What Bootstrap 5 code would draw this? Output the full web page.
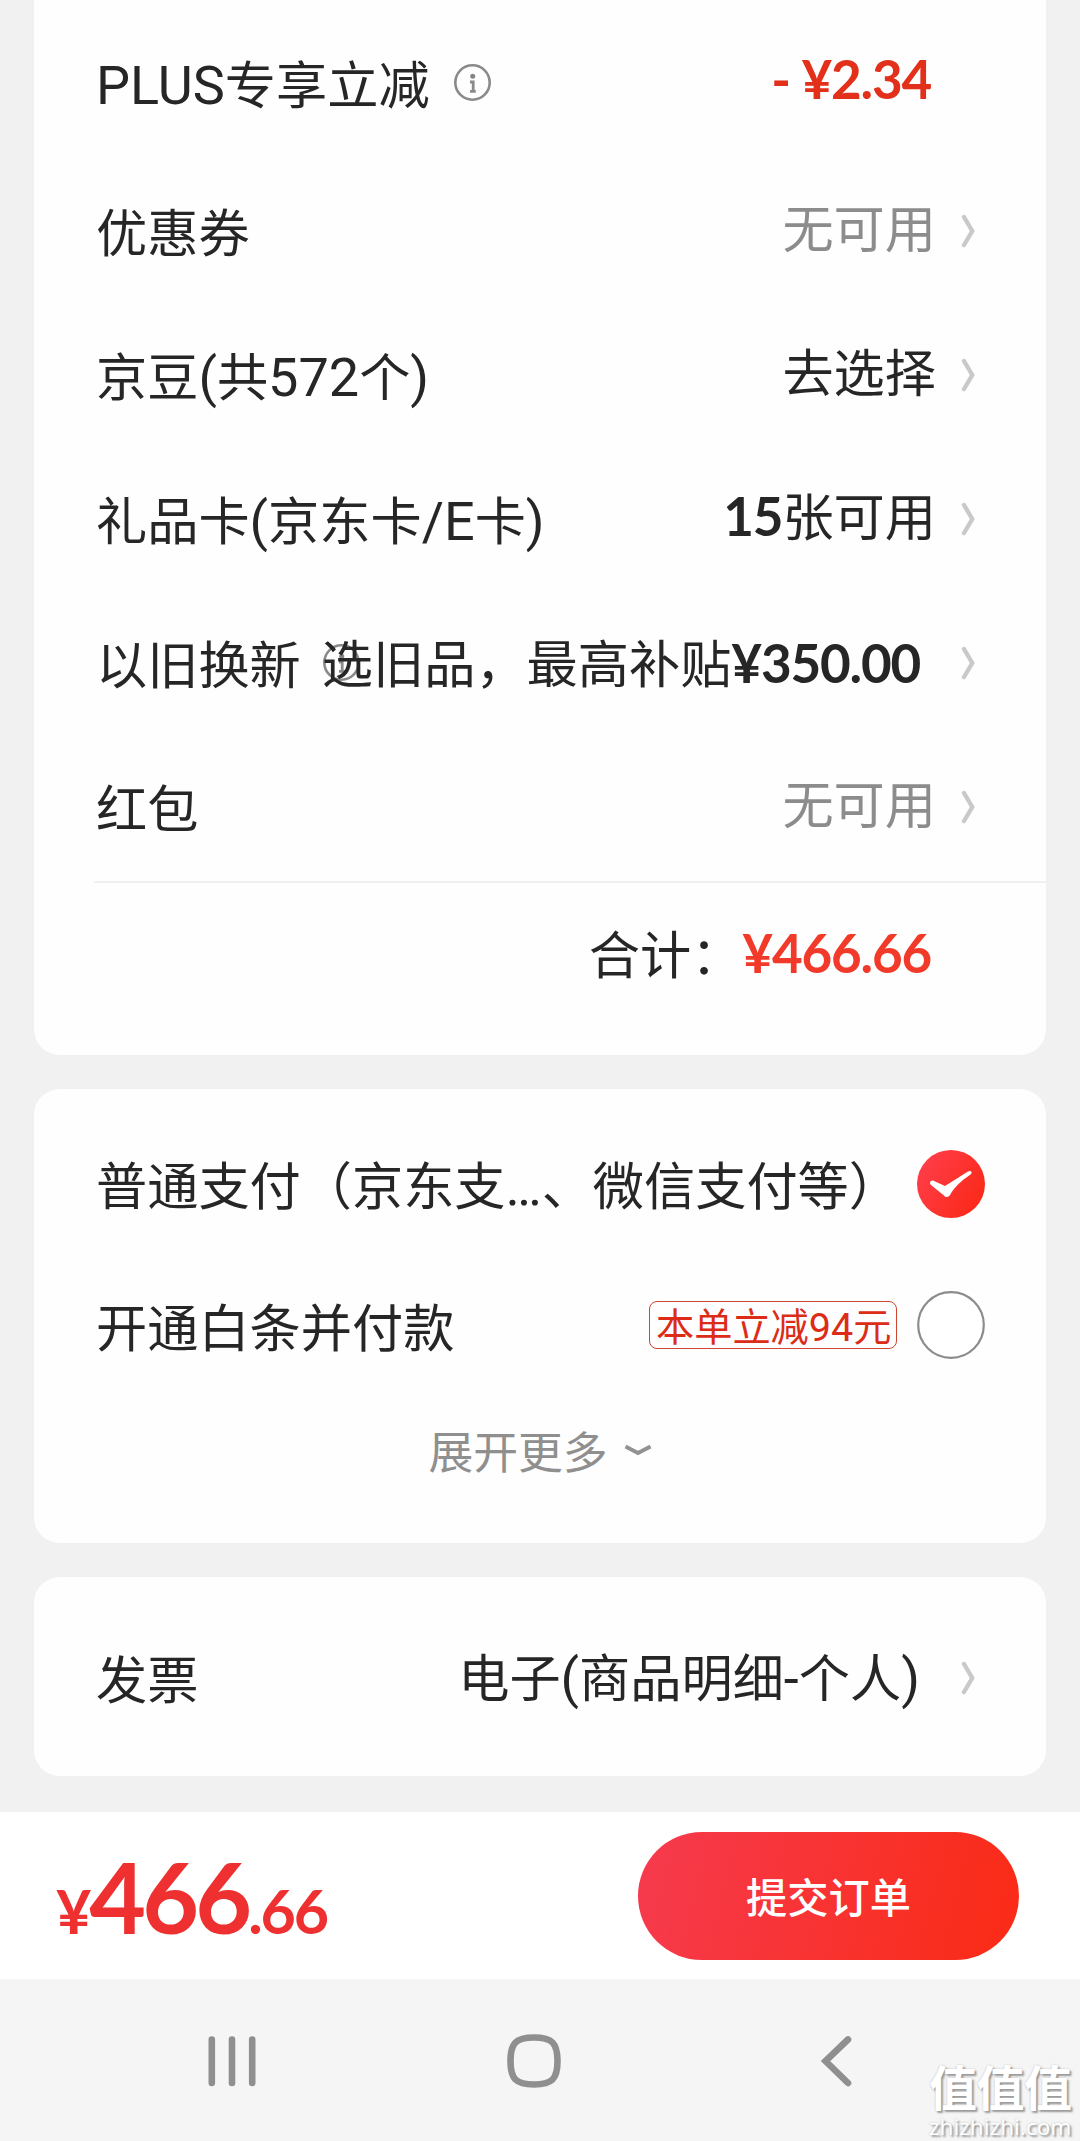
<!DOCTYPE html>
<html lang="zh-CN">
<head>
<meta charset="utf-8">
<meta name="viewport" content="width=device-width, initial-scale=1">
<title>填写订单</title>
<link href="https://cdn.jsdelivr.net/npm/bootstrap@5.3.0/dist/css/bootstrap.min.css" rel="stylesheet">
<style>
  body { background: #f1f1f1; color: #262626; font: 400 51.2px/60px "Noto Sans CJK SC", sans-serif; width: 1080px; height: 2141px; overflow: hidden; }
  .latin { font-family: Roboto, sans-serif; font-size: 54px; line-height: 1; }
  .digits { font-family: Lato, sans-serif; font-weight: 700; font-size: 53px; line-height: 1; letter-spacing: -1.2px; }
  .panel { margin: 0 34px 34px; border: 0; border-radius: 26px; background: #fefefe; }
  .panel-top { height: 1055px; border-radius: 0 0 26px 26px; }
  .line-item { height: 144px; padding: 0 71px 0 62px; white-space: nowrap; }
  .line-first { height: 158px; padding-top: 7px; padding-right: 115px; }
  .value { margin-left: auto; margin-right: 25px; padding-bottom: 9px; }
  .value-level { padding-bottom: 2px; margin-right: 41px; }
  .muted { color: #8c8c8c; }
  .price { color: #e2301a; }
  .price-total { color: #f23a2a; }
  .chev { width: 14px; height: 34px; margin-top: 2px; flex: none; }
  .tip { width: 37px; height: 37px; flex: none; }
  .tip-under { left: 289px; top: 54px; z-index: 0; }
  .rule { margin: 3px 0 0 60px; height: 2px; background: #f0f0f0; }
  .total-line { height: 138px; padding-right: 115px; white-space: nowrap; }
  .pay-line { height: 141px; padding: 0 61px 0 62px; white-space: nowrap; }
  .pick { width: 68px; height: 68px; flex: none; }
  .coupon { width: 248px; height: 48px; border: 1.5px solid #cf4534; border-radius: 8px; color: #dc2c17; font-size: 38.2px; line-height: 46px; margin-right: 20px; margin-left: auto; padding-left: 6px; }
  .coupon .latin { font-size: 39.5px; }
  .more { height: 110px; font-size: 44.8px; color: #8f8f8f; }
  .pay-bar { height: 167px; background: #fff; padding: 0 61px 0 56px; }
  .sum { color: #ee3030; font-family: Lato, sans-serif; font-weight: 700; font-size: 61px; line-height: 1; letter-spacing: -2.2px; }
  .sum-big { font-size: 98px; letter-spacing: -3.8px; }
  .submit { width: 381px; height: 128px; border: 0; color: #fff; font-size: 41.2px; font-weight: 500; background: linear-gradient(105deg, #f63a4c 5%, #fa2c19 92%); }
  .submit:hover { color: #fff; }
  .sys-nav { height: 162px; background: #f5f5f5; }
  .brand-stamp { right: 9px; bottom: 0; width: 142px; color: #fff; text-shadow: 2px 2px 2px #999, 0 0 2px #bbb; }
  .stamp-cn { font-size: 48px; line-height: 56px; font-weight: 700; white-space: nowrap; letter-spacing: -.5px; }
  .stamp-en { font: 400 22.5px/28px "Noto Sans", sans-serif; }
</style>
</head>
<body>
<svg class="d-none" xmlns="http://www.w3.org/2000/svg">
  <symbol id="chev" viewBox="0 0 14 34"><path d="M3 3 11.3 17 3 31" fill="none" stroke="#c9c9c9" stroke-width="4.4" stroke-linecap="round" stroke-linejoin="round"/></symbol>
  <symbol id="tip" viewBox="0 0 37 37"><circle cx="18.5" cy="18.5" r="17.2" fill="none" stroke="#8a8a8a" stroke-width="2.6"/><circle cx="18.7" cy="12.2" r="2.5" fill="#858585"/><path d="M16 18h3.2v9.2M16 27.3h5.8" fill="none" stroke="#8a8a8a" stroke-width="2.8"/></symbol>
</svg>

<main>
  <section class="card panel panel-top">
    <div class="line-item line-first d-flex align-items-center">
      <span><span class="latin">PLUS</span>专享立减</span>
      <svg class="tip ms-4"><use href="#tip"/></svg>
      <span class="digits price ms-auto pb-2" id="plus-off">- ¥2.34</span>
    </div>
    <div class="line-item d-flex align-items-center">
      <span>优惠券</span><span class="value muted">无可用</span><svg class="chev"><use href="#chev"/></svg>
    </div>
    <div class="line-item d-flex align-items-center">
      <span>京豆<span class="latin">(</span>共<span class="latin">572</span>个<span class="latin">)</span></span><span class="value">去选择</span><svg class="chev"><use href="#chev"/></svg>
    </div>
    <div class="line-item d-flex align-items-center">
      <span>礼品卡<span class="latin">(</span>京东卡<span class="latin">/E</span>卡<span class="latin">)</span></span><span class="value"><span class="digits">15</span>张可用</span><svg class="chev"><use href="#chev"/></svg>
    </div>
    <div class="line-item d-flex align-items-center position-relative">
      <svg class="tip tip-under position-absolute"><use href="#tip"/></svg>
      <span>以旧换新</span><span class="value value-level position-relative">选旧品，最高补贴<span class="digits">¥350.00</span></span><svg class="chev"><use href="#chev"/></svg>
    </div>
    <div class="line-item d-flex align-items-center">
      <span>红包</span><span class="value muted">无可用</span><svg class="chev"><use href="#chev"/></svg>
    </div>
    <div class="rule"></div>
    <div class="total-line d-flex align-items-center justify-content-end">
      <span>合计：</span><span class="digits price-total">¥466.66</span>
    </div>
  </section>

  <section class="card panel pt-4" style="height:454px">
    <div class="pay-line d-flex align-items-center justify-content-between">
      <span>普通支付（京东支<span class="latin">…</span>、微信支付等）</span>
      <svg class="pick" viewBox="0 0 68 68">
        <defs><linearGradient id="pickFill" x1="0" y1="0" x2="1" y2=".6"><stop offset="0" stop-color="#ff4050"/><stop offset="1" stop-color="#fb2a1a"/></linearGradient></defs>
        <circle cx="34" cy="34" r="34" fill="url(#pickFill)"/>
        <path d="M13 33c0-2 2-3 4-2l11 5L51 21.500c2-1.200 4-.5 3.500 1.500-.2 1-1 1.600-2 2.300C44 31 37.500 37 33 45c-1.500 2.500-4.500 2.600-6 .4L14 35c-.7-.6-1-1.200-1-2z" fill="#fff"/>
      </svg>
    </div>
    <div class="pay-line d-flex align-items-center">
      <span>开通白条并付款</span>
      <span class="coupon">本单立减<span class="latin">94</span>元</span>
      <svg class="pick" viewBox="0 0 68 68"><circle cx="34" cy="34" r="32.800" fill="#fff" stroke="#8c8c8c" stroke-width="2.200"/></svg>
    </div>
    <div class="more d-flex align-items-center justify-content-center">
      <span>展开更多</span>
      <svg class="ms-3" width="28" height="14" viewBox="0 0 28 14"><path d="M1.500 3.500 14 10 26.500 3.500" fill="none" stroke="#929292" stroke-width="4"/></svg>
    </div>
  </section>

  <section class="card panel mb-0 justify-content-center" style="height:199px">
    <div class="line-item d-flex align-items-center">
      <span>发票</span><span class="value value-level">电子<span class="latin">(</span>商品明细<span class="latin">-</span>个人<span class="latin">)</span></span><svg class="chev"><use href="#chev"/></svg>
    </div>
  </section>
</main>

<footer style="padding-top:36px">
  <div class="pay-bar d-flex align-items-center justify-content-between">
    <div class="sum">¥<span class="sum-big">466</span>.66</div>
    <button type="button" class="btn rounded-pill submit">提交订单</button>
  </div>
  <nav class="sys-nav position-relative">
    <svg width="1080" height="162" viewBox="0 0 1080 162" class="d-block" fill="none" stroke="#8f8f8f" stroke-width="6.600" stroke-linecap="round">
      <path d="M211.800 60.500v43.500M232 60.500v43.500M252.200 60.500v43.500"/>
      <path d="M534 58.500c18 0 23.500 5.500 23.500 23.500s-5.500 23.500-23.500 23.500-23.500-5.500-23.500-23.500 5.500-23.500 23.500-23.500z"/>
      <path d="M848 60.500 825.500 82 848 104"/>
    </svg>
    <div class="brand-stamp position-absolute">
      <div class="stamp-cn">值值值</div>
      <div class="stamp-en">zhizhizhi.com</div>
    </div>
  </nav>
</footer>
<script src="https://cdn.jsdelivr.net/npm/bootstrap@5.3.0/dist/js/bootstrap.bundle.min.js"></script>
</body>
</html>
